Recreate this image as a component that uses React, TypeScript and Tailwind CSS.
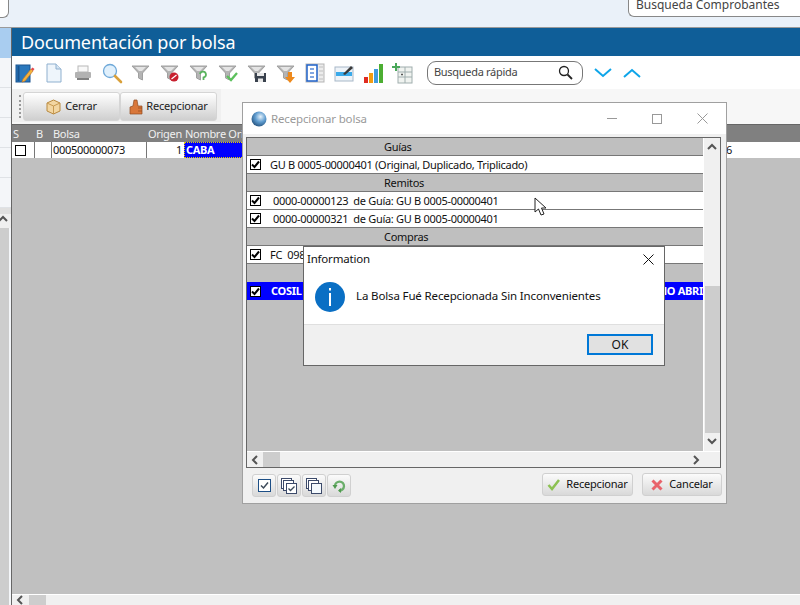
import React from "react";

const Funnel = ({ children }: { children?: React.ReactNode }) => (
  <svg width="22" height="22" viewBox="0 0 22 22">
    <path d="M2 4h17l-6.500 7v7l-4-2v-5z" fill="#b4b4b4" stroke="#a0a0a0" />
    <path d="M5 5h11l-4 4h-3z" fill="#e4e4e4" />
    {children}
  </svg>
);

const ToolIcons = () => (
  <>
    <svg width="22" height="22" viewBox="0 0 22 22">
      <rect x="2" y="3" width="14" height="17" fill="#2a78bd" stroke="#1a5590" />
      <rect x="3.500" y="4" width="2" height="15" fill="#1a5590" />
      <path d="M9 17l-1 3 3-1 8-10-2-2z" fill="#f4b23c" stroke="#c07a2a" strokeWidth="0.700" />
      <path d="M17 7l2 2 1.500-2-2-1.500z" fill="#e5484d" />
    </svg>
    <svg width="22" height="22" viewBox="0 0 22 22">
      <path d="M4 2h9l5 5v13H4z" fill="#eef5fb" stroke="#8fb0cf" />
      <path d="M13 2v5h5" fill="#d5e4f2" stroke="#8fb0cf" />
    </svg>
    <svg width="22" height="22" viewBox="0 0 22 22">
      <rect x="6" y="4" width="10" height="6" fill="#f8f8f8" stroke="#b8b8b8" />
      <rect x="3" y="10" width="16" height="6" rx="1" fill="#b2b2b2" />
      <rect x="5" y="16" width="12" height="2" fill="#808080" />
    </svg>
    <svg width="22" height="22" viewBox="0 0 22 22">
      <circle cx="9" cy="9" r="6.500" fill="#e0f0fc" stroke="#6ea8d8" strokeWidth="1.300" />
      <path d="M14 14l6 6" stroke="#d9a03a" strokeWidth="2.600" strokeLinecap="round" />
    </svg>
    <Funnel />
    <Funnel>
      <circle cx="15" cy="15" r="4.500" fill="#c8202f" />
      <path d="M12.500 17l5-4" stroke="#fff" strokeWidth="1.300" />
    </Funnel>
    <Funnel>
      <path d="M12 12a3 3 0 1 1 3.500 3.500v2.500" fill="none" stroke="#5ab45e" strokeWidth="1.800" />
    </Funnel>
    <Funnel>
      <path d="M10 14l4 4 6-7" fill="none" stroke="#5cc05c" strokeWidth="2.300" />
    </Funnel>
    <Funnel>
      <rect x="9" y="11" width="11" height="9" fill="#3a424e" />
      <rect x="11" y="11" width="7" height="3" fill="#e8e8e8" />
      <rect x="12" y="16.500" width="5" height="3.500" fill="#e8e8e8" />
    </Funnel>
    <Funnel>
      <path d="M13 10h4v5h3l-5 6-5-6h3z" fill="#ee8a1d" />
    </Funnel>
    <svg width="22" height="22" viewBox="0 0 22 22">
      <rect x="2" y="2" width="18" height="18" fill="#ececec" stroke="#b5b5b5" />
      <rect x="3" y="3" width="10" height="16" fill="#fff" stroke="#1f62c9" strokeWidth="1.500" />
      <path d="M6 7h4M6 11h4M6 15h4" stroke="#5a8ad8" strokeWidth="1.500" />
      <path d="M15 5h4M15 9h4M15 13h4M15 17h4" stroke="#c0c0c0" />
    </svg>
    <svg width="22" height="22" viewBox="0 0 22 22">
      <rect x="2" y="5" width="18" height="14" fill="#eef3f8" stroke="#a8b8c8" />
      <rect x="3" y="10" width="16" height="4" fill="#3aaaea" />
      <path d="M10 12l8-8 2 2-8 7z" fill="#3a3a3a" />
    </svg>
    <svg width="22" height="22" viewBox="0 0 22 22">
      <rect x="2" y="15" width="4" height="6" fill="#e02b20" />
      <rect x="7" y="11" width="4" height="10" fill="#f39c12" />
      <rect x="12" y="7" width="4" height="14" fill="#3f9be0" />
      <rect x="17" y="2" width="4" height="19" fill="#4cae32" />
    </svg>
    <svg width="22" height="22" viewBox="0 0 22 22">
      <rect x="7" y="5" width="14" height="16" fill="#f0f3f0" stroke="#a0aeae" />
      <path d="M14 5v16M7 10h14M7 15h14" stroke="#a0aeae" />
      <path d="M1 4h3V1h2v3h3v2H6v3H4V6H1z" fill="#4aa85a" />
      <path d="M10 12.500h2M11 11.500v2" stroke="#555" />
    </svg>
  </>
);

const Check = ({ on = true }: { on?: boolean }) => (
  <span className="flex h-[11px] w-[11px] shrink-0 items-center justify-center border border-black bg-white">
    {on && (
      <svg width="9" height="9" viewBox="0 0 9 9">
        <path d="M1 4.500l2.500 2.500L8 1.500" fill="none" stroke="#000" strokeWidth="2" />
      </svg>
    )}
  </span>
);

const GroupHeader = ({ label }: { label: string }) => (
  <div className="flex h-[18px] items-center border-b border-[#777] bg-[#bfbfbf]">
    <span className="ml-[137px] pt-[1px]">{label}</span>
  </div>
);

const CheckRow = ({ text, className }: { text: string; className: string }) => (
  <div className="flex h-[18px] items-center overflow-hidden border-b border-[#777] bg-white pl-[3px]">
    <Check />
    <span className={`whitespace-pre pt-[1px] ${className}`}>{text}</span>
  </div>
);

const Chevron = ({ d, className }: { d: string; className?: string }) => (
  <svg width="10" height="10" viewBox="0 0 10 10" className={className}>
    <path d={d} fill="none" stroke="#555" strokeWidth="2" />
  </svg>
);

const SmallButton = ({ children }: { children: React.ReactNode }) => (
  <div className="flex h-[23px] w-[24px] items-center justify-center rounded-[3px] border border-[#d0d0d0] bg-gradient-to-b from-[#fbfbfb] to-[#d9d9d9]">
    {children}
  </div>
);

const RecepcionarDialog = () => (
  <div className="absolute left-[242px] top-[102px] flex h-[402px] w-[485px] flex-col border border-[#a0a0a0] bg-[#f0f0f0]">
    <div className="flex h-[31px] shrink-0 items-center bg-white pl-[8px]">
      <svg width="16" height="16" viewBox="0 0 16 16">
        <defs>
          <radialGradient id="globe" cx="0.6" cy="0.35" r="0.7">
            <stop offset="0" stopColor="#e6f2fb" />
            <stop offset="0.5" stopColor="#5f9ccf" />
            <stop offset="1" stopColor="#24527e" />
          </radialGradient>
        </defs>
        <circle cx="8" cy="8" r="7.500" fill="url(#globe)" />
      </svg>
      <span className="ml-[4px] text-[11.5px] tracking-[-0.15px] text-[#9a9a9a]">Recepcionar bolsa</span>
      <div className="ml-auto mr-[18px] flex items-center gap-[35px]">
        <div className="h-px w-[10px] bg-[#999]" />
        <div className="h-[10px] w-[10px] border border-[#999]" />
        <svg width="11" height="11" viewBox="0 0 11 11">
          <path d="M0.500 0.500l10 10M10.500 0.500l-10 10" stroke="#999" />
        </svg>
      </div>
    </div>
    <div className="ml-[3px] mr-[5px] mt-[3px] flex h-[331px] flex-col border border-[#666] bg-[#c0c0c0]">
      <div className="flex h-[313px]">
        <div className="min-w-0 flex-1 text-[11px] tracking-[-0.3px] text-[#111]">
          <GroupHeader label="Guías" />
          <CheckRow text="GU B 0005-00000401 (Original, Duplicado, Triplicado)" className="ml-[9px]" />
          <GroupHeader label="Remitos" />
          <CheckRow text="0000-00000123  de Guía: GU B 0005-00000401" className="ml-[12px]" />
          <CheckRow text="0000-00000321  de Guía: GU B 0005-00000401" className="ml-[12px]" />
          <GroupHeader label="Compras" />
          <CheckRow text="FC  0987" className="ml-[9px]" />
          <div className="h-[18px]" />
          <div className="flex h-[18px] items-center justify-between bg-[#0000ff] pl-[3px] font-bold text-white">
            <span className="flex items-center">
              <Check />
              <span className="ml-[10px]">COSIL</span>
            </span>
            <span>NO ABRI</span>
          </div>
        </div>
        <div className="flex w-[17px] shrink-0 flex-col items-center border-l border-white bg-[#f0f0f0]">
          <Chevron d="M1 7l4-4 4 4" className="mt-[4px]" />
          <div className="mt-[134px] h-[147px] w-[15px] bg-[#cdcdcd]" />
          <Chevron d="M1 3l4 4 4-4" className="mt-[3px]" />
        </div>
      </div>
      <div className="flex h-[16px] items-center border-t border-white bg-[#f0f0f0]">
        <Chevron d="M7 1L3 5l4 4" className="ml-[3px]" />
        <div className="ml-[3px] h-full w-[17px] bg-[#cdcdcd]" />
        <Chevron d="M3 1l4 4-4 4" className="ml-auto mr-[19px]" />
      </div>
    </div>
    <div className="ml-[9px] mr-[4px] mt-[5px] flex items-start">
      <div className="mt-[1px] flex gap-[1px]">
        <SmallButton>
          <span className="flex h-[13px] w-[13px] items-center justify-center border border-[#1d4f86] bg-white">
            <svg width="9" height="9" viewBox="0 0 9 9">
              <path d="M1 4.500l2.500 2.500L8 1.500" fill="none" stroke="#3c4a5a" strokeWidth="1.500" />
            </svg>
          </span>
        </SmallButton>
        <SmallButton>
          <svg width="16" height="16" viewBox="0 0 16 16">
            <rect x="0.500" y="0.500" width="10" height="10" fill="#fff" stroke="#3c4a6a" />
            <rect x="2.500" y="2.500" width="10" height="10" fill="#fff" stroke="#3c4a6a" />
            <rect x="5.500" y="5.500" width="10" height="10" fill="#fff" stroke="#3c4a6a" />
            <path d="M7.500 10.500l2 2 4-4" fill="none" stroke="#3c4a5a" strokeWidth="1.300" />
          </svg>
        </SmallButton>
        <SmallButton>
          <svg width="16" height="16" viewBox="0 0 16 16">
            <rect x="0.500" y="0.500" width="10" height="10" fill="#fff" stroke="#3c4a6a" />
            <rect x="2.500" y="2.500" width="10" height="10" fill="#fff" stroke="#3c4a6a" />
            <rect x="5.500" y="5.500" width="10" height="10" fill="#f4f9fd" stroke="#3c4a6a" />
          </svg>
        </SmallButton>
        <SmallButton>
          <svg width="14" height="14" viewBox="0 0 14 14">
            <path d="M3 7a4.500 4.500 0 1 1 4 4.500" fill="none" stroke="#6aae6a" strokeWidth="2.300" />
            <path d="M0.500 6h5L3 10z" fill="#4e9a4e" />
            <path d="M9 9l-3 2.500 3 2.500z" fill="#4e9a4e" />
          </svg>
        </SmallButton>
      </div>
      <div className="ml-auto flex gap-[9px] text-[11px] tracking-[-0.2px] text-[#111]">
        <div className="flex h-[23px] w-[91px] items-center justify-center gap-[6px] rounded-[3px] border border-[#d0d0d0] bg-gradient-to-b from-[#fbfbfb] to-[#d9d9d9]">
          <svg width="13" height="13" viewBox="0 0 13 13">
            <path d="M1.500 7l3.500 4 7-9" fill="none" stroke="#8cc152" strokeWidth="2.500" />
          </svg>
          Recepcionar
        </div>
        <div className="flex h-[23px] w-[80px] items-center justify-center gap-[6px] rounded-[3px] border border-[#d0d0d0] bg-gradient-to-b from-[#fbfbfb] to-[#d9d9d9]">
          <svg width="12" height="12" viewBox="0 0 12 12">
            <path d="M1.500 1.500l9 9M10.500 1.500l-9 9" stroke="#e8636b" strokeWidth="3" />
          </svg>
          Cancelar
        </div>
      </div>
    </div>
  </div>
);

const InfoDialog = () => (
  <div className="absolute left-[303px] top-[246px] flex h-[120px] w-[362px] flex-col border border-[#666] bg-white">
    <div className="flex h-[23px] shrink-0 items-center justify-between pl-[3px] pr-[10px] pt-[1px] text-[11.5px] tracking-[-0.2px] text-[#111]">
      <span>Information</span>
      <svg width="11" height="11" viewBox="0 0 11 11">
        <path d="M0.500 0.500l10 10M10.500 0.500l-10 10" stroke="#111" />
      </svg>
    </div>
    <div className="flex h-[54px] items-center pl-[11px]">
      <div className="flex h-[30px] w-[30px] items-center justify-center rounded-full bg-[#0a6fc4]">
        <svg width="4" height="18" viewBox="0 0 4 18">
          <rect x="1" y="0" width="2" height="2.500" fill="#fff" />
          <rect x="1" y="5" width="2" height="13" fill="#fff" />
        </svg>
      </div>
      <span className="mb-[2px] ml-[11px] text-[11.5px] tracking-[-0.14px] text-[#111]">
        La Bolsa Fué Recepcionada Sin Inconvenientes
      </span>
    </div>
    <div className="flex flex-1 items-start justify-end border-t border-[#dfdfdf] bg-[#f0f0f0] pr-[11px] pt-[9px]">
      <div className="flex h-[21px] w-[66px] items-center justify-center border-2 border-[#0078d7] bg-[#e1e1e1] text-[12px] text-[#111]">
        OK
      </div>
    </div>
  </div>
);

export default function App() {
  return (
    <div className="relative flex h-[605px] w-[800px] flex-col overflow-hidden bg-[#c0c0c0] font-['Noto_Sans','Open_Sans',sans-serif]">
      <div className="relative flex h-[28px] shrink-0 justify-between border-b border-[#9a9a9a] bg-[#eaf1f9]">
        <div className="h-[18px] w-[9px] rounded-br-[6px] border-b border-r border-[#888] bg-white" />
        <div className="h-[17px] w-[172px] rounded-bl-[6px] border-b border-l border-[#888] bg-white pl-[7px] text-[12px] leading-[10px] text-[#444]">
          Busqueda Comprobantes
        </div>
      </div>
      <div className="flex min-h-0 flex-1">
        <div className="flex w-[11px] shrink-0 flex-col bg-[#f4f6f9]">
          <div className="h-[30px] bg-[#a9cdf0]" />
          {[0, 1, 2, 3, 4].map((i) => (
            <div key={i} className="h-[30px] border-b border-[#dfe2e6]" />
          ))}
          <div className="h-[6px] bg-[#e0e0e0]" />
          <div className="flex h-[14px] bg-[#f0f0f0]">
            <Chevron d="M-1 7l4-4 4 4" />
          </div>
          <div className="mr-[2px] flex-1 bg-[#cdcdcd]" />
        </div>
        <div className="flex min-w-0 flex-1 flex-col border-l border-[#666]">
          <div className="flex h-[28px] shrink-0 items-center bg-[#0f5e98] pl-[9px] text-[18px] tracking-[-0.15px] text-white">
            Documentación por bolsa
          </div>
          <div className="flex h-[33px] shrink-0 items-center bg-white">
            <div className="flex w-[408px] items-center gap-[7px] pl-[2px]">
              <ToolIcons />
            </div>
            <div className="ml-[7px] flex h-[24px] w-[156px] items-center justify-between rounded-[9px] border border-[#777] bg-white pl-[6px] pr-[9px] text-[11px] tracking-[-0.3px] text-[#444]">
              Busqueda rápida
              <svg width="15" height="15" viewBox="0 0 15 15">
                <circle cx="6" cy="6" r="4.500" fill="none" stroke="#222" strokeWidth="1.300" />
                <path d="M9.500 9.500l4.500 4.500" stroke="#222" strokeWidth="1.800" />
              </svg>
            </div>
            <svg width="18" height="10" viewBox="0 0 18 10" className="ml-[11px]">
              <path d="M1 1l8 7 8-7" fill="none" stroke="#0ea5e9" strokeWidth="2" />
            </svg>
            <svg width="18" height="10" viewBox="0 0 18 10" className="ml-[11px]">
              <path d="M1 9l8-7 8 7" fill="none" stroke="#0ea5e9" strokeWidth="2" />
            </svg>
          </div>
          <div className="flex h-[35px] shrink-0 bg-[#f7f7f7]">
            <div className="flex h-[33px] items-start bg-[#f0f0f0] pl-[7px] pr-[4px] pt-[3px]">
              <div className="mr-[2px] mt-[3px] h-[23px] w-[2px] border-l-2 border-dotted border-[#999]" />
              <div className="flex h-[29px] w-[97px] items-center justify-center gap-[4px] rounded-[3px] border border-[#d5d5d5] bg-gradient-to-b from-[#ffffff] to-[#cfcfcf] text-[11px] tracking-[-0.2px] text-[#222]">
                <svg width="15" height="16" viewBox="0 0 15 16">
                  <path d="M7.500 1L14 4v8l-6.500 3L1 12V4z" fill="#f2d6a2" stroke="#b8893f" />
                  <path d="M1 4l6.500 3L14 4M7.500 7v8" fill="none" stroke="#c79a52" />
                </svg>
                Cerrar
              </div>
              <div className="flex h-[29px] w-[97px] items-center justify-center gap-[3px] rounded-[3px] border border-[#d5d5d5] bg-gradient-to-b from-[#ffffff] to-[#cfcfcf] text-[11px] tracking-[-0.2px] text-[#222]">
                <svg width="14" height="16" viewBox="0 0 14 16">
                  <path d="M5 1h3l1 6h4v8H1V8l3-1z" fill="#d9773a" stroke="#8f4a20" strokeWidth="0.700" />
                  <path d="M9 9h4M9 12h4" stroke="#8f4a20" strokeWidth="0.700" />
                </svg>
                Recepcionar
              </div>
            </div>
          </div>
          <div className="flex h-[18px] shrink-0 items-center border-t border-[#666] bg-[#808080] pl-[1px] pt-[1px] text-[11px] tracking-[-0.3px] text-[#f0f0f0]">
            <span className="w-[23px]">S</span>
            <span className="w-[17px]">B</span>
            <span className="w-[95px]">Bolsa</span>
            <span className="w-[37px]">Origen</span>
            <span>Nombre Origen</span>
          </div>
          <div className="flex h-[16px] shrink-0 items-center bg-white text-[11px] tracking-[-0.3px] text-[#111]">
            <span className="flex h-full w-[22px] items-center pl-[3px]">
              <Check on={false} />
            </span>
            <span className="h-full w-[17px] border-l border-[#777]" />
            <span className="h-full w-[95px] border-l border-[#777] pl-[1px] leading-[16px]">000500000073</span>
            <span className="h-full w-[38px] border-l border-[#777] pr-[2px] text-right leading-[16px]">1</span>
            <span className="h-full w-[60px] border border-dotted border-[#e8d000] bg-[#0000ff] pl-[1px] font-bold leading-[14px] text-white">
              CABA
            </span>
            <span className="ml-auto mr-[68px]">6</span>
          </div>
          <div className="flex-1 bg-[#c0c0c0]" />
          <div className="flex h-[11px] shrink-0 items-center border-t border-white bg-[#f0f0f0]">
            <Chevron d="M7 1L3 5l4 4" className="ml-[3px]" />
            <div className="ml-[4px] h-full w-[17px] bg-[#cdcdcd]" />
          </div>
        </div>
      </div>

      <RecepcionarDialog />
      <InfoDialog />

      <svg width="14" height="20" viewBox="0 0 14 20" className="absolute left-[534px] top-[197px]">
        <path d="M1 1v14l3.500-3 2.500 6 3-1-2.500-6h4.500z" fill="#fff" stroke="#222" />
      </svg>
    </div>
  );
}
